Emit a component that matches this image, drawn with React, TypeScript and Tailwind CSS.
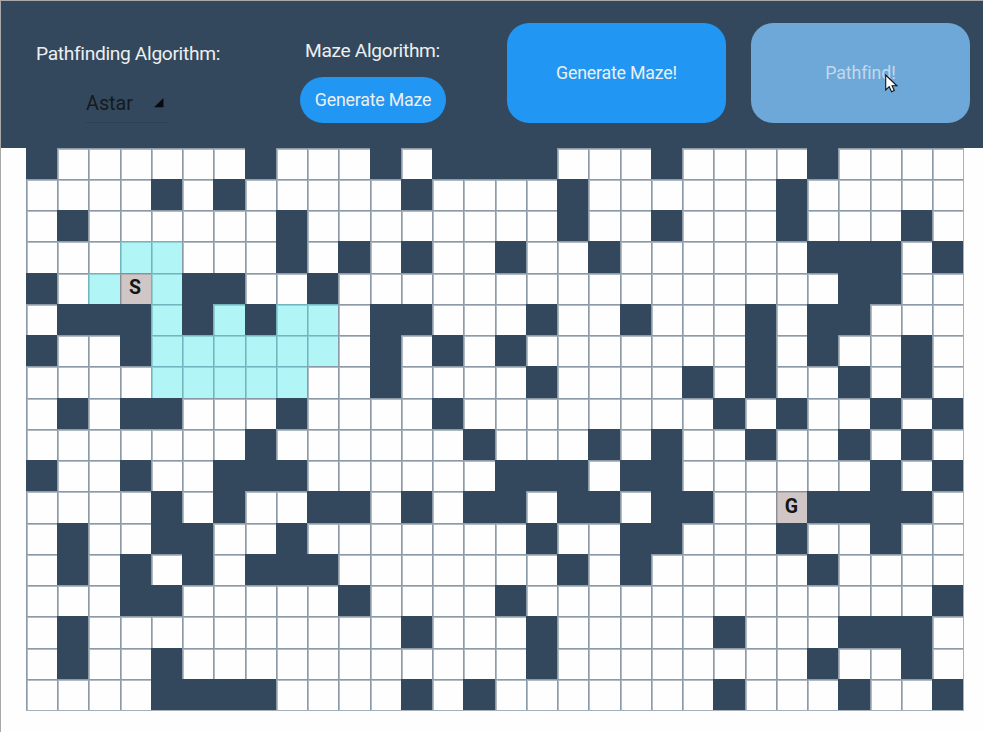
const COLS = 30;

type Row = { walls: number[]; visited?: number[] };

const ROWS: Row[] = [
  { walls: [0, 7, 11, 13, 14, 15, 16, 20, 25] },
  { walls: [4, 6, 12, 17, 24] },
  { walls: [1, 8, 17, 20, 24, 28] },
  { walls: [8, 10, 12, 15, 18, 25, 26, 27, 29], visited: [3, 4] },
  { walls: [0, 5, 6, 9, 26, 27], visited: [2, 4] },
  { walls: [1, 2, 3, 5, 7, 11, 12, 16, 19, 23, 25, 26], visited: [4, 6, 8, 9] },
  { walls: [0, 3, 11, 13, 15, 23, 25, 28], visited: [4, 5, 6, 7, 8, 9] },
  { walls: [11, 16, 21, 23, 26, 28], visited: [4, 5, 6, 7, 8] },
  { walls: [1, 3, 4, 8, 13, 22, 24, 27, 29] },
  { walls: [7, 14, 18, 20, 23, 26, 28] },
  { walls: [0, 3, 6, 7, 8, 15, 16, 17, 19, 20, 27, 29] },
  { walls: [4, 6, 9, 10, 12, 14, 15, 17, 18, 20, 21, 25, 26, 27, 28] },
  { walls: [1, 4, 5, 8, 16, 19, 20, 24, 27] },
  { walls: [1, 3, 5, 7, 8, 9, 17, 19, 25] },
  { walls: [3, 4, 10, 15, 29] },
  { walls: [1, 12, 16, 22, 26, 27, 28] },
  { walls: [1, 4, 16, 25, 28] },
  { walls: [4, 5, 6, 7, 12, 14, 22, 26, 29] },
];

const LABELS: Record<string, string> = { "4-3": "S", "11-24": "G" };

const base = "flex items-center justify-center border-l border-t pb-[1.5px] pr-px text-[19.5px] font-bold leading-none text-[#151515] ";
const STYLES = {
  wall: base + "border-[#33485c] bg-[#33485c]",
  visited: base + "border-[#72b5bf] bg-[#b2f5f7] shadow-[inset_1px_1px_0_#8fcfd6]",
  label: base + "border-[#8b8f96] bg-[#cfc6c5] shadow-[inset_1px_1px_0_#b1acae]",
  open: base + "border-[#8d9aa8] bg-[#fefefe] shadow-[inset_1px_1px_0_#b0bac3]",
};

function Cell({ r, c }: { r: number; c: number }) {
  const label = LABELS[`${r}-${c}`];
  const row = ROWS[r];
  const kind = label ? "label" : row.walls.includes(c) ? "wall" : row.visited?.includes(c) ? "visited" : "open";
  return <div className={STYLES[kind]}>{label}</div>;
}

function Cursor() {
  return (
    <svg className="absolute left-[134px] top-[51px]" width="14" height="20" viewBox="0 0 14 20">
      <path d="M.7 1v15l3.5-3.3 2.4 5 2.7-1.2-2.2-4.7h4.8z" fill="#fff" stroke="#111" strokeWidth="1.1" />
    </svg>
  );
}

export default function App() {
  return (
    <div className="h-[732px] w-[983px] overflow-hidden border-l border-t border-[#a8a8a8] bg-[#fefefe] font-[Roboto,sans-serif]">
      <header className="flex h-[146.7px] bg-[#33485c] text-[#eceff1]">
        <div className="w-[299px] shrink-0 pl-[35px] pt-[41px]">
          <div className="whitespace-nowrap text-[19.2px] leading-6 tracking-[-0.33px]">Pathfinding Algorithm:</div>
          <div className="ml-[50px] mt-[24px] flex h-[33px] w-[83px] items-start border-b border-[#2d4053] text-[19.8px] leading-7 text-[#151a1f]">
            <span className="w-[68px]">Astar</span>
            <svg className="mt-[8px]" width="10" height="10" viewBox="0 0 10 10">
              <path d="M0 9.3 9.5 0v9.3z" fill="#080a0c" />
            </svg>
          </div>
        </div>
        <div className="w-[207px] shrink-0 pt-[38px]">
          <div className="pl-[5px] text-[19.2px] leading-6 tracking-[-0.33px]">Maze Algorithm:</div>
          <button className="mt-[14px] block h-[46px] w-[146px] rounded-[23px] bg-[#2196f3] text-[17.8px] tracking-[-0.2px]">Generate Maze</button>
        </div>
        <button className="mt-[22px] h-[100px] w-[219px] shrink-0 rounded-[22px] bg-[#2196f3] text-[17.8px] tracking-[-0.2px]">Generate Maze!</button>
        <button className="relative ml-[25px] mt-[22px] h-[100px] w-[219px] shrink-0 rounded-[22px] bg-[#6ea8d8] text-[17.8px] tracking-[-0.1px] text-[#c3d8ea]">
          Pathfind!
          <Cursor />
        </button>
      </header>
      <main className="ml-[24.75px] grid h-[563.5px] w-[938.5px] grid-cols-[repeat(30,31.25px)] grid-rows-[repeat(18,31.25px)] border-b border-r border-[#a6b0ba]">
        {ROWS.map((_, r) => Array.from({ length: COLS }, (_, c) => <Cell key={`${r}-${c}`} r={r} c={c} />))}
      </main>
    </div>
  );
}
